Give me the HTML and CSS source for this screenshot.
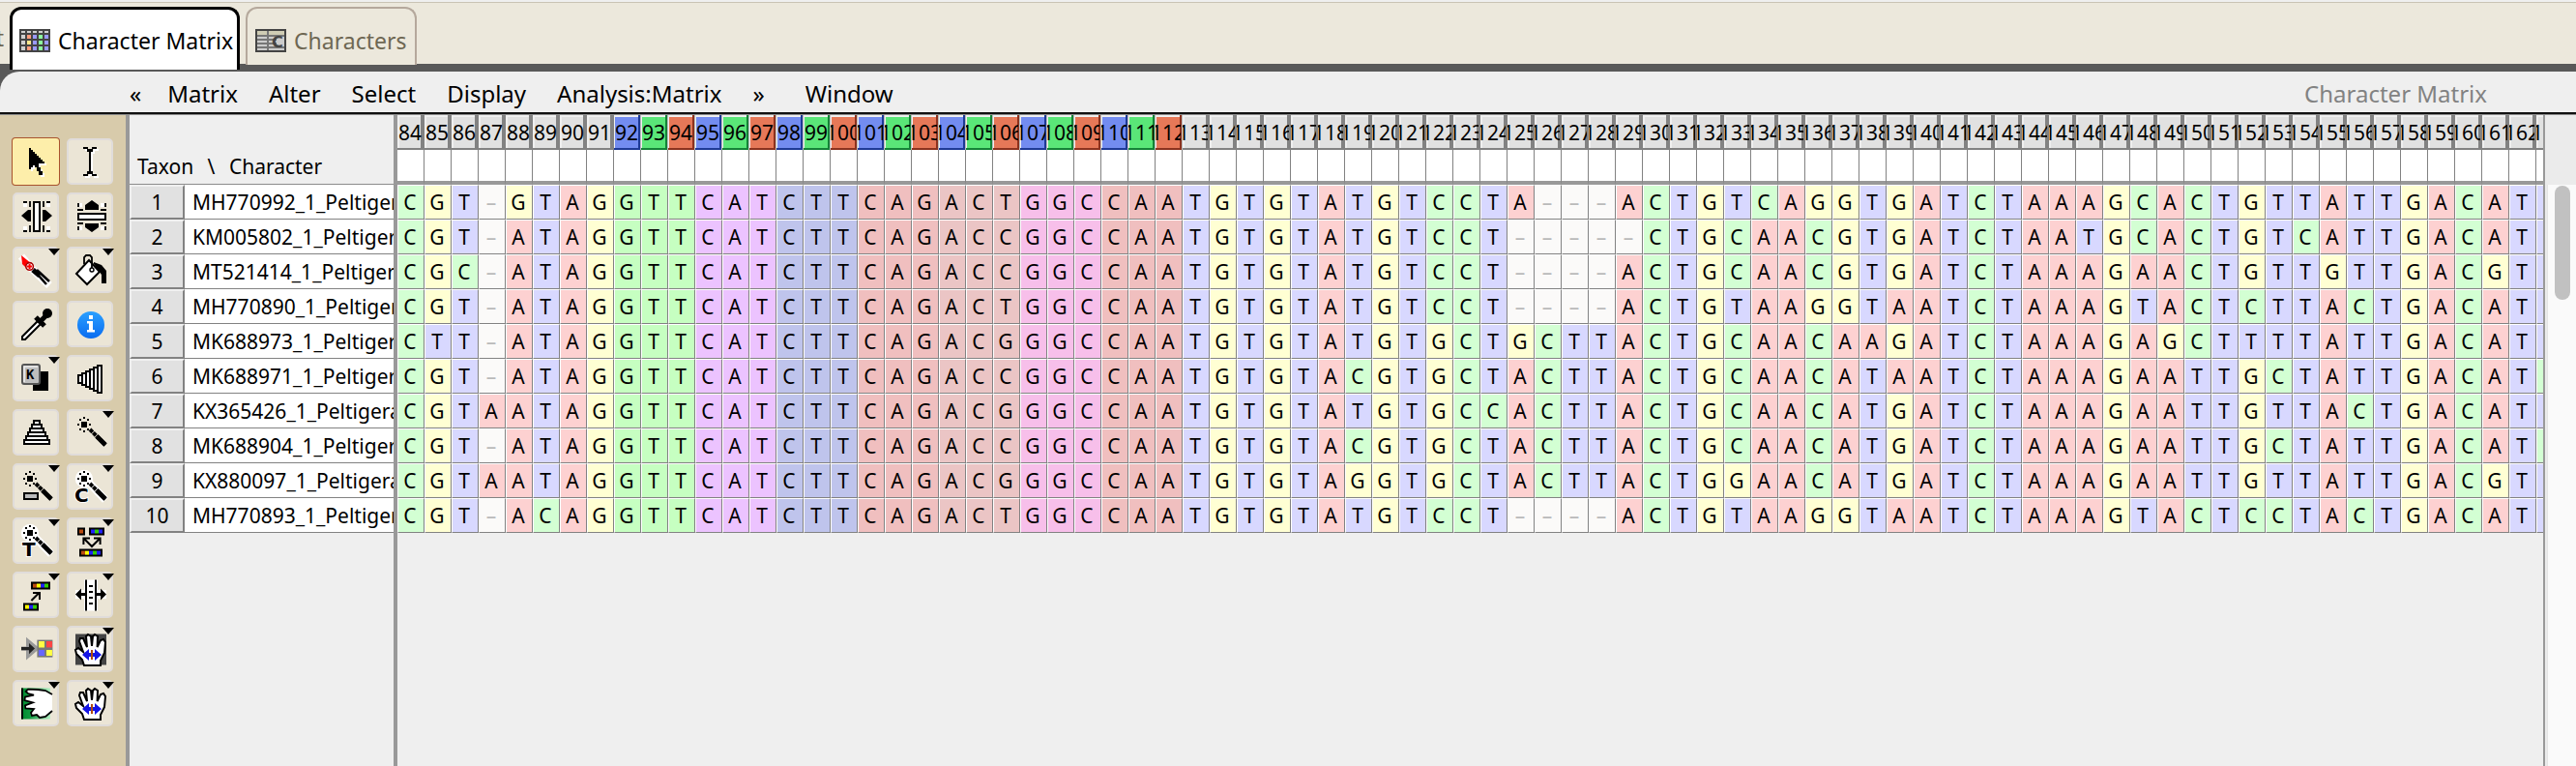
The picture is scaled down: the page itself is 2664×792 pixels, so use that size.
FILE: index.html
```html
<!DOCTYPE html>
<html lang="en">
<head>
<meta charset="utf-8">
<title>Character Matrix</title>
<link rel="stylesheet" href="styles.css">
</head>
<body>
<svg class="defs" aria-hidden="true">
  <defs>
    <linearGradient id="blue" x1="0" y1="0" x2="0" y2="1"><stop offset="0" stop-color="#2ba0ff"/><stop offset="1" stop-color="#0a6cf0"/></linearGradient>
    <linearGradient id="green"><stop offset="0" stop-color="#008a2e"/><stop offset=".3" stop-color="#109a40"/><stop offset="1" stop-color="#b4f0c4"/></linearGradient>
    <path id="arrow" d="M8.500 5h1v1h1v1h1v1h1v1h1v1h1v1h1v1h1v1h-3v2h1v2h1v2h-2v-2h-1v-2h-1v-1h-1v1h-1v1h-1z"/>
    <path id="beam" d="M8.500 4.500h2.500v1h2v-1h2.500v1h-2v1.500h-1v10h1v1.500h2v1h-2.500v-1h-2v1H8.500v-1h2V17h1V7h-1V5.500h-2z"/>
    <g id="star">
      <path d="M7.500 6.500h3v3h-3zM8.500 4h1v1h-1zM8.500 11h1v1h-1zM5.500 7.500h1v1h-1zM11.500 7.500h1v1h-1zM6.500 5h1v1h-1zM10.500 5h1v1h-1zM6.500 10h1v1h-1zM10.500 10h1v1h-1z"/>
      <path d="M12 10.500l8 8" stroke="#000" stroke-width="2" stroke-dasharray="2 .4" fill="none"/>
      <path d="M15.500 14l4.500 4.500" stroke="#000" stroke-width="2.400" fill="none"/>
    </g>
    <g id="glow">
      <circle cx="9" cy="8" r="4.600" fill="#fff"/>
      <path d="M11.500 10l8.500 9" stroke="#fff" stroke-width="4" fill="none"/>
    </g>
    <g id="hand">
      <path d="M9 20.500L8 17.500 5 14.500 4.500 12.500 6 11.500 8.500 13.500 6.500 8 7 6.500 8.500 6.500 10.500 11 10 5.500 11 4.500 12.500 5.500 13 10.500 13.500 5.500 14.500 4.500 16 5.500 15.800 11 17.500 7.500 19 7 20 8.500 19.500 14 17.500 18V20.500Z" fill="#fff" stroke="#000"/>
      <path d="M8 15l3.500-3v2h1.500v2h-1.500v2zM18 15l-3.500-3v2H13v2h1.500v2z" fill="#1414e6"/>
      <path d="M12.500 12.500h1v5h-1z" fill="#b04a10"/>
    </g>
  </defs>
</svg>

<nav class="tabs">
  <span class="tab-cut">t</span>
  <button class="tab tab-active">
    <svg width="32" height="24" viewBox="0 0 32 24" shape-rendering="crispEdges" aria-hidden="true">
      <path fill="#444" d="M0 0h32v24H0z"/>
      <path fill="#cfcfcf" d="M2 2h4v2H2zM8 2h4v2H8zM14 2h4v2h-4zM20 2h4v2h-4zM26 2h4v2h-4zM2 6h4v4H2zM2 12h4v4H2zM2 18h4v4H2z"/>
      <path fill="#ff9c7c" d="M8 6h4v4H8zM8 18h4v4H8z"/><path fill="#ffe88c" d="M8 12h4v4H8z"/>
      <path fill="#9a9aff" d="M14 6h4v4h-4zM14 12h4v4h-4zM14 18h4v4h-4zM26 6h4v4h-4zM26 12h4v4h-4zM26 18h4v4h-4z"/>
      <path fill="#8cff9c" d="M20 6h4v4h-4zM20 12h4v4h-4zM20 18h4v4h-4z"/>
    </svg>
    <span>Character Matrix</span>
  </button>
  <button class="tab">
    <svg width="32" height="24" viewBox="0 0 32 24" aria-hidden="true">
      <g shape-rendering="crispEdges"><path fill="#cfccb4" stroke="#444" stroke-width="2" d="M1 1h30v22H1z"/>
      <path fill="#ccc" d="M2 8h28v14H2z"/><path fill="#777" d="M2 6h28v2H2zM2 10h20v2H2zM2 14h20v2H2zM2 18h28v2H2zM12 2h2v20h-2z"/></g>
      <text x="17" y="19" class="glyph-c">C</text>
    </svg>
    <span>Characters</span>
  </button>
</nav>

<div class="frame">
<header class="menubar">
  <nav class="menus">
    <button class="menu menu-first">«</button><button class="menu">Matrix</button><button class="menu">Alter</button><button class="menu">Select</button><button class="menu">Display</button><button class="menu">Analysis:Matrix</button><button class="menu">»</button><button class="menu menu-last">Window</button>
  </nav>
  <span class="window-name">Character Matrix</span>
</header>

<main class="workspace">
  <aside class="tools">
    <button class="tool selected" aria-label="Select"><svg viewBox="0 0 24 24" shape-rendering="crispEdges"><use href="#arrow" x="1" y="1" fill="#fff"/><use href="#arrow"/></svg></button>
    <button class="tool" aria-label="Text"><svg viewBox="0 0 24 24" shape-rendering="crispEdges"><use href="#beam" x="1" y="1" fill="#fff"/><use href="#beam"/></svg></button>

    <button class="tool" aria-label="Column width"><svg viewBox="0 0 24 24"><path fill="#fff" d="M5.500 5h2v2.500h-2zM17.500 5h2v2.500h-2zM5.500 17.500h2V20h-2zM17.500 17.500h2V20h-2z"/><path d="M11 5h3v15h-3z" fill="#fff" stroke="#000"/><path d="M4.500 12L8 9v6zM8 9h1.500v6H8zM20.500 12L17 9v6zM15.500 9H17v6h-1.500z"/><path d="M9 4.500v3M9 17v3.500M16 4.500v3M16 17v3.500M5.500 5h2M5.500 20h2M17.500 5h2M17.500 20h2" stroke="#000" stroke-width=".9"/></svg></button>
    <button class="tool" aria-label="Row height"><svg viewBox="0 0 24 24"><path fill="#fff" d="M5.500 5.500H8v2H5.500zM17.500 5.500H20v2h-2.500zM5.500 17.500H8v2H5.500zM17.500 17.500H20v2h-2.500z"/><path d="M6 11h14v3H6z" fill="#fff" stroke="#000"/><path d="M13 4l3.500 2.500V9h-7V6.500zM13 20.500l3.500-2.500v-2h-7v2z"/><path d="M5.500 9h3M17.500 9h3M5.500 16h3M17.500 16h3M6 5.500v2M20 5.500v2M6 17.500v2M20 17.500v2" stroke="#000" stroke-width=".9"/></svg></button>

    <button class="tool drop" aria-label="Brush"><svg viewBox="0 0 24 24"><path d="M4.500 5l5 6 9.500 9" stroke="#fff" stroke-width="4" fill="none"/><path d="M4.500 4.500L5 9l2 2 3-2z" fill="#f00"/><circle cx="8.800" cy="10.200" r="1.900" fill="#fff" stroke="#a00" stroke-width=".8"/><path d="M8.800 9v2.500M7.500 10.200H10" stroke="#f00"/><path d="M10.500 12l3.500 3" stroke="#000" stroke-width="2.600"/><path d="M12.500 12l6.500 6M13.500 15l4 4.500" stroke="#000" stroke-width="1.300"/></svg></button>
    <button class="tool drop" aria-label="Fill"><svg viewBox="0 0 24 24"><path d="M14 8l4 1.500 2.500 3V19H18v-4.500L14 9z"/><path d="M11.500 7l5.500 6-6.500 6.500L5 14z" fill="#fff" stroke="#000"/><path d="M9 9V5.500l1-1h2l1 1V11" fill="none" stroke="#000" stroke-width=".9"/><circle cx="13" cy="12" r="1" fill="#fff" stroke="#000" stroke-width=".7"/></svg></button>

    <button class="tool" aria-label="Pick colour"><svg viewBox="0 0 24 24"><path d="M5 20v-1.500L13 10.500l1.500 1.500-8 8z" fill="#fff" stroke="#000"/><circle cx="18" cy="6.500" r="2.500"/><path d="M12 8.500l4.500 4.500M14.500 10.500l3-3" stroke="#000" stroke-width="2.600"/></svg></button>
    <button class="tool" aria-label="Information"><svg viewBox="0 0 24 24"><circle cx="12.500" cy="12.500" r="7" fill="url(#blue)"/><path fill="#fff" d="M11.500 7.500h2v2h-2zM10.500 10.500h3v4.500h1v1.200h-4V15h1v-3.200h-1z"/></svg></button>

    <button class="tool drop" aria-label="Key"><svg viewBox="0 0 24 24"><path d="M10.500 8.500h8v10h-8z"/><rect x="5" y="5" width="9" height="10" rx="1" fill="#bdbdbd" stroke="#555"/><path d="M6 14V6h7" stroke="#eee" fill="none" stroke-width=".8"/><text x="7" y="12.500" class="key">K</text></svg></button>
    <button class="tool" aria-label="Sort columns"><svg viewBox="0 0 24 24" shape-rendering="crispEdges"><path d="M6 10.500h2v4H6zM8 9.500h2v6H8zM10 8.500h2v8h-2zM12 7.500h2v10h-2zM14 6.500h2v12h-2zM16 5.500h2v14h-2z" fill="#fff" stroke="#000"/></svg></button>

    <button class="tool" aria-label="Sort rows"><svg viewBox="0 0 24 24" shape-rendering="crispEdges"><path d="M11 6h3v2h-3zM10 8h5v2h-5zM9 10h7v2H9zM8 12h9v2H8zM7 14h11v2H7zM6 16h13v2H6z" fill="#fff" stroke="#000"/></svg></button>
    <button class="tool drop" aria-label="Wand"><svg viewBox="0 0 24 24"><use href="#star"/></svg></button>

    <button class="tool drop" aria-label="Wand cells"><svg viewBox="0 0 24 24"><use href="#star"/><path d="M6 15.500h7v3H6z" fill="#bbb" stroke="#000"/></svg></button>
    <button class="tool drop" aria-label="Wand characters"><svg viewBox="0 0 24 24"><use href="#glow"/><use href="#star"/><text x="4" y="20" class="wand-letter">C</text></svg></button>

    <button class="tool drop" aria-label="Wand taxa"><svg viewBox="0 0 24 24"><use href="#glow"/><use href="#star"/><text x="5" y="20" class="wand-letter">T</text></svg></button>
    <button class="tool drop" aria-label="Split blocks"><svg viewBox="0 0 24 24"><path d="M5.500 5.300h4v4h-4zM11.500 5.300h8v4h-8zM6.500 16.300h12v4h-12z"/><path fill="#b84a10" d="M6.500 6.300h2v2h-2zM7.500 17.300h2v2h-2z"/><path fill="#2020ff" d="M12.500 6.300h2v2h-2zM16.500 6.300h2v2h-2zM11.500 17.300h2v2h-2zM15.500 17.300h2v2h-2z"/><path fill="#3c0" d="M14.500 6.300h2v2h-2zM13.500 17.300h2v2h-2z"/><path fill="#ff0" d="M9.500 17.300h2v2h-2z"/><path d="M9 11l4 4 4-4M8.700 14v-3.200H12M14 10.800h3.300V14" fill="none" stroke="#000"/></svg></button>

    <button class="tool drop" aria-label="Move blocks"><svg viewBox="0 0 24 24"><path d="M9.500 5.300h10v4h-10zM5.500 16.300h8v4h-8z"/><path fill="#b84a10" d="M10.500 6.300h2v2h-2z"/><path fill="#ff0" d="M12.500 6.300h2v2h-2zM6.500 17.300h2v2h-2z"/><path fill="#2020ff" d="M14.500 6.300h2v2h-2zM8.500 17.300h2v2h-2z"/><path fill="#3c0" d="M16.500 6.300h2v2h-2zM10.500 17.300h2v2h-2z"/><path d="M9.700 15l4-4M10.500 11h3.500v3.500" fill="none" stroke="#000"/></svg></button>
    <button class="tool drop" aria-label="Split matrix"><svg viewBox="0 0 24 24"><path fill="#fff" d="M9 4.300h7v16H9zM4.500 9.500H9v4.500H4.500zM16 9.500h4.500V14H16z"/><path d="M10 4.300v16M15 4.300v16" stroke="#000"/><path d="M11.500 7.500h2M11.500 10.500h2M11.500 13.500h2M11.500 16.500h2" stroke="#000"/><path d="M4.500 11.800l3-3v2.200H10v1.500H7.500v2.200zM20.500 11.800l-3-3v2.200H15v1.500h2.500v2.200z"/></svg></button>

    <button class="tool" aria-label="Colour cells"><svg viewBox="0 0 24 24"><path d="M4.500 11.800h5M8 8v7.600l4.500-3.800z" stroke="#999" fill="#999" stroke-width="2"/><path d="M4.500 11h4V9l3 2.800-3 2.800v-2h-4z" fill="#222"/><path fill="#777" d="M12.700 7.300h8v9h-8z"/><path fill="#ff4" d="M13.500 8h3v3.200h-3zM17.500 12.500h3v3h-3z"/><path fill="#f44" d="M17.500 8h3v3.200h-3z"/><path fill="#66f" d="M13.500 12.500h3v3h-3z"/></svg></button>
    <button class="tool drop" aria-label="Drag selection"><svg viewBox="0 0 24 24"><path fill="#444" d="M4.500 4.300h16v16h-16z"/><use href="#hand"/></svg></button>

    <button class="tool drop" aria-label="Push sequence"><svg viewBox="0 0 24 24"><path fill="url(#green)" d="M4.500 4.300h15v16h-15z"/><path d="M5 4.300v16" stroke="#000"/><path d="M20.500 7.500L17 5.500 13 5 8 4.800 6.800 6 8 7l3 .8-4.500 1-.3 1.700 4.300 1.200-4 1.500.2 1.500 4.300.3L9.500 17l.5 1.500 2.500-.5 1.500 1.500 3-.5 3.500-3z" fill="#fff"/><path d="M20.500 7.500L17 5.500 13 5 8 4.800 6.800 6 8 7l3 .8-4.500 1-.3 1.700 4.300 1.200-4 1.500.2 1.500 4.300.3L9.500 17l.5 1.500 2.500-.5 1.500 1.500 3-.5 3.500-3" fill="none" stroke="#000" stroke-width=".9"/></svg></button>
    <button class="tool drop" aria-label="Drag sequence"><svg viewBox="0 0 24 24"><use href="#hand"/></svg></button>
  </aside>

  <section class="taxa">
    <table>
      <colgroup><col class="col-num"><col class="col-name"></colgroup>
      <thead><tr><th colspan="2" class="corner">Taxon <span class="slash">\</span> Character</th></tr></thead>
      <tbody id="taxa"></tbody>
    </table>
  </section>
  <section class="cells">
    <table>
      <colgroup id="cols"></colgroup>
      <thead id="head"></thead>
      <tbody id="body"></tbody>
    </table>
  </section>
  <div class="scroll"><div class="track"><div class="thumb"></div></div></div>
</main>
</div>
<script src="matrix.js"></script>
</body>
</html>
```
FILE: styles.css
```css
* { box-sizing: border-box; }
html, body { height: 100%; }
body {
  margin: 0;
  display: flex;
  flex-direction: column;
  overflow: hidden;
  background: #efefef;
  color: #000;
  font-family: "Noto Sans", "Open Sans", sans-serif;
  font-size: 21px;
  line-height: 28px;
}
button { font: inherit; color: inherit; margin: 0; padding: 0; border: 0; background: none; }
.defs { position: absolute; width: 0; height: 0; }

/* tab strip */
.tabs {
  flex: none;
  display: flex;
  height: 72px;
  margin-top: 2px;
  padding-bottom: 8px;
  border-top: 1px solid #c9c3b5;
  background: linear-gradient(#ece8dc 63px, #595959 63px);
  font-size: 23px;
}
.tab-cut {
  width: 10px;
  display: flex;
  justify-content: flex-end;
  padding: 20px 6px 0 0;
  line-height: 32px;
  color: #6e6753;
}
.tab {
  display: flex;
  align-items: center;
  gap: 8px;
  height: 60px;
  margin: 4px 6px 0 0;
  padding: 7px 8px 0;
  border: 2px solid #b5a89c;
  border-bottom: 0;
  border-radius: 12px 12px 0 0;
  background: #ece8dc;
  color: #6e6753;
  line-height: 32px;
  white-space: nowrap;
}
.tab-active {
  height: 65px;
  padding: 2px 4px 0 7px;
  border: 3px solid #000;
  border-bottom: 0;
  background: #fff;
  color: #000;
}
.glyph-c { font: bold 16px "DejaVu Sans", sans-serif; fill: #444; }

/* window frame and menu bar */
.frame { flex: 1; min-height: 0; display: flex; flex-direction: column; background: #595959; }
.menubar {
  flex: none;
  display: flex;
  justify-content: space-between;
  align-items: center;
  height: 44px;
  padding: 4px 92px 0 134px;
  border-bottom: 2px solid #111;
  border-radius: 20px 0 0 0;
  background: #efefef;
  font-size: 24px;
  line-height: 32px;
}
.menus { display: flex; gap: 32px; }
.menu-first { margin-right: -5px; }
.menu-last { margin-left: 10px; }
.window-name { color: #828282; }

/* workspace */
.workspace { flex: 1; min-height: 0; display: flex; background: #efefef; border-top: 1px solid #8c8c8c; }
.tools {
  flex: none;
  display: grid;
  grid-template-columns: 48px 48px;
  grid-auto-rows: 48px;
  gap: 8px;
  align-content: start;
  width: 134px;
  padding: 24px 0 0 13px;
  border-right: 4px solid #999;
  background: #d8cbab;
}
.tool {
  position: relative;
  border: 2px solid #e0dcda;
  border-radius: 5px;
  background: #ebe5d6;
}
.tool svg { position: absolute; inset: -2px; width: 48px; height: 48px; }
.tool.selected { border-color: #fdeeaa; border-radius: 3px; background: #fdeeaa; box-shadow: 0 0 0 1px #a8532d; }
.drop::after {
  content: "";
  position: absolute;
  top: 0;
  right: -3px;
  border: 6px solid transparent;
  border-width: 7px 6px 0;
  border-top-color: #000;
}
.key { font: bold 7px "DejaVu Sans Mono", monospace; }
.wand-letter { font: bold 10px "DejaVu Sans", sans-serif; stroke: #fff; stroke-width: 1px; paint-order: stroke; }

table { border-collapse: separate; border-spacing: 0; table-layout: fixed; width: 1px; }
th, td { padding: 0; font-weight: 400; overflow: hidden; white-space: nowrap; }

/* taxon names */
.taxa { flex: none; width: 277px; border-right: 4px solid #999; }
.col-num { width: 57px; }
.col-name { width: 216px; }
.corner { height: 72px; padding: 0 0 4px 8px; text-align: left; vertical-align: bottom; border-bottom: 1px solid #8c8c8c; }
.slash { padding: 0 9px; }
.num {
  height: 36px;
  border: 2px solid #f0f0f0;
  border-right-color: #828282;
  border-bottom-color: #828282;
  background: #e1e1e1;
}
.name { height: 36px; padding-left: 8px; border-bottom: 1px solid #828282; background: #fff; text-align: left; }

/* character columns */
.cells { flex: 1; min-width: 0; overflow: hidden; border-right: 2px solid #999; }
.col { width: 28px; }
.head {
  --edge: #828282;
  height: 36px;
  background: #e1e1e1;
  box-shadow: inset -4px 0 var(--edge), inset 0 -2px var(--edge), inset 2px 2px #efefef;
}
.head span { display: flex; justify-content: center; width: 26px; overflow: hidden; }
.head.p1, .head.p2, .head.p3 { box-shadow: inset -1px 0 #bbb, inset -3px -2px var(--edge), inset 1px 2px #efefef; }
.head.p1 { --edge: #1e3a96; background: #738cf0; }
.head.p2 { --edge: #148237; background: #5ae678; }
.head.p3 { --edge: #8c321e; background: #e67858; }
.blank { height: 36px; border-right: 1px solid #828282; border-bottom: 4px solid #999; background: #fff; }
.base {
  height: 36px;
  padding-right: 2px;
  border: 1px solid #fff;
  border-right-color: #828282;
  border-bottom-color: #828282;
  text-align: center;
}
.A { background: #fdd1d1; }
.C { background: #d3ffd3; }
.G { background: #ffffd3; }
.T { background: #d8d8ff; }
.gap { background: #fbfaf9; color: #b9b9b9; }
.codon1 { background: #c6ffc1; }
.codon2 { background: #ecc3ff; }
.codon3 { background: #bfc4ec; }
.codon4, .codon7 { background: #f0bfbf; }
.codon5 { background: #ebc5c5; }
.codon6 { background: #f7bfea; }

/* vertical scroll bar */
.scroll { flex: none; width: 32px; padding: 72px 0 0 2px; background: #ebebeb; }
.track { height: 100%; padding: 1px 7px; background: #fafafa; border-left: 1px solid #e4e4e4; }
.thumb { width: 16px; height: 118px; border-radius: 8px; background: #c1c1c1; }
```
FILE: matrix.js
```js
const firstColumn = 84;
const codonStart = 92;
const codonEnd = 112;

const rows = [
  ["MH770992_1_Peltigera", "CGT-GTAGGTTCATCTTCAGACTGGCCAATGTGTATGTCCTA---ACTGTCAGGTGATCTAAAGCACTGTTATTGACATT"],
  ["KM005802_1_Peltigera", "CGT-ATAGGTTCATCTTCAGACCGGCCAATGTGTATGTCCT-----CTGCAACGTGATCTAATGCACTGTCATTGACATT"],
  ["MT521414_1_Peltigera", "CGC-ATAGGTTCATCTTCAGACCGGCCAATGTGTATGTCCT----ACTGCAACGTGATCTAAAGAACTGTTGTTGACGTT"],
  ["MH770890_1_Peltigera", "CGT-ATAGGTTCATCTTCAGACTGGCCAATGTGTATGTCCT----ACTGTAAGGTAATCTAAAGTACTCTTACTGACATT"],
  ["MK688973_1_Peltigera", "CTT-ATAGGTTCATCTTCAGACGGGCCAATGTGTATGTGCTGCTTACTGCAACAAGATCTAAAGAGCTTTTATTGACATT"],
  ["MK688971_1_Peltigera", "CGT-ATAGGTTCATCTTCAGACCGGCCAATGTGTACGTGCTACTTACTGCAACATAATCTAAAGAATTGCTATTGACATC"],
  ["KX365426_1_Peltigera", "CGTAATAGGTTCATCTTCAGACGGGCCAATGTGTATGTGCCACTTACTGCAACATGATCTAAAGAATTGTTACTGACATT"],
  ["MK688904_1_Peltigera", "CGT-ATAGGTTCATCTTCAGACCGGCCAATGTGTACGTGCTACTTACTGCAACATGATCTAAAGAATTGCTATTGACATC"],
  ["KX880097_1_Peltigera", "CGTAATAGGTTCATCTTCAGACGGGCCAATGTGTAGGTGCTACTTACTGGAACATGATCTAAAGAATTGTTATTGACGTT"],
  ["MH770893_1_Peltigera", "CGT-ACAGGTTCATCTTCAGACTGGCCAATGTGTATGTCCT----ACTGTAAGGTAATCTAAAGTACTCCTACTGACATT"]
];

const columns = Array.from(rows[0][1], (_, i) => firstColumn + i);
const inCodons = n => n >= codonStart && n <= codonEnd;
const position = n => inCodons(n) ? " p" + ((n - codonStart) % 3 + 1) : "";

function cellClass(base, n) {
  if (inCodons(n)) return "codon" + (Math.floor((n - codonStart) / 3) + 1);
  return base === "-" ? "gap" : base;
}

document.getElementById("cols").innerHTML = columns.map(() => '<col class="col">').join("");
document.getElementById("head").innerHTML =
  "<tr>" + columns.map(n => `<th class="head${position(n)}"><span>${n}</span></th>`).join("") + "</tr>" +
  "<tr>" + columns.map(() => '<td class="blank"></td>').join("") + "</tr>";

document.getElementById("taxa").innerHTML = rows.map(([name], i) =>
  `<tr><th class="num">${i + 1}</th><th class="name">${name}</th></tr>`).join("");

document.getElementById("body").innerHTML = rows.map(([, seq]) =>
  "<tr>" + Array.from(seq, (b, i) =>
    `<td class="base ${cellClass(b, columns[i])}">${b === "-" ? "–" : b}</td>`).join("") + "</tr>").join("");
```
